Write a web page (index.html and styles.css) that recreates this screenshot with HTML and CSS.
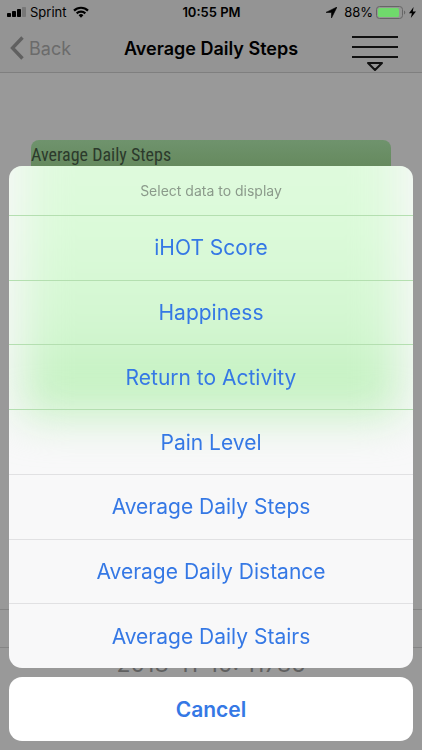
FILE: index.html
```
<!DOCTYPE html>
<html lang="en">
<head>
    <meta charset="UTF-8">
    <meta name="viewport" content="width=device-width, initial-scale=1.0">
    <title>Average Daily Steps</title>
    <link rel="stylesheet" href="styles.css">
</head>
<body>
<header class="top">
    <div class="status">
        <div class="carrier">
            <svg width="19" height="10" viewBox="0 0 19 10">
                <rect x="0" y="6" width="4" height="4" rx="0.8"/>
                <rect x="5" y="4" width="4" height="6" rx="0.8"/>
                <rect x="10" y="2" width="4" height="8" rx="0.8"/>
                <rect x="15" y="0" width="4" height="10" rx="0.8" fill="#777"/>
            </svg>
            <span>Sprint</span>
            <svg class="wifi" width="16" height="12" viewBox="0 0 16 12" fill="none" stroke="#000" stroke-width="2.2">
                <path d="M1 4.6a10 10 0 0 1 14 0"/>
                <path d="M3.7 7.4a6.1 6.1 0 0 1 8.6 0"/>
                <path d="M8 11.800 5.600 9.300a3.400 3.400 0 0 1 4.800 0z" fill="#000" stroke="none"/>
            </svg>
        </div>
        <div class="time">10:55 PM</div>
        <div class="power">
            <svg class="location" width="11" height="11" viewBox="0 0 11 11"><path d="M11 0 0 5.400h5.500V11z" stroke="#000" stroke-width="0.6"/></svg>
            <span>88%</span>
            <svg width="30" height="13" viewBox="0 0 30 13">
                <rect x="0.5" y="0.5" width="26" height="12" rx="3" fill="none" stroke="#666"/>
                <rect x="2" y="2" width="21" height="9" rx="1.5" fill="#70d96c"/>
                <path d="M28 4.5a2.2 2.2 0 0 1 0 4z" fill="#666"/>
            </svg>
            <svg width="7" height="11" viewBox="0 0 7 11"><path d="M4.6 0 0 6.2h2.9L1.8 11 7 4.4H3.8z"/></svg>
        </div>
    </div>
    <nav class="nav">
        <a class="back" href="#">
            <svg width="14" height="24" viewBox="0 0 14 24" fill="none" stroke="#606060" stroke-width="3.4"><path d="M12.5 1.5 2.5 12l10 10.5"/></svg>
            Back
        </a>
        <h1>Average Daily Steps</h1>
        <button class="menu" aria-label="Select data">
            <svg width="46" height="37" viewBox="0 0 46 37" fill="none" stroke="#111" stroke-width="2">
                <path d="M0 2h46M0 12h46M0 22h46"/>
                <path d="M16 28h14L23 35z" stroke-linejoin="round"/>
            </svg>
        </button>
    </nav>
</header>

<main>
    <section class="chart">
        <h2>Average Daily Steps</h2>
    </section>
    <div class="picker">
        <div class="selected"></div>
        <div class="value">2018-11-10: 11786</div>
    </div>
</main>

<div class="sheet">
    <div class="actions">
        <p>Select data to display</p>
        <button>iHOT Score</button>
        <button>Happiness</button>
        <button>Return to Activity</button>
        <button>Pain Level</button>
        <button>Average Daily Steps</button>
        <button>Average Daily Distance</button>
        <button>Average Daily Stairs</button>
    </div>
    <button class="cancel">Cancel</button>
</div>
</body>
</html>
```
FILE: styles.css
```
*{
    box-sizing: border-box;
}
body{
    margin: 0;
    height: 100vh;
    overflow: hidden;
    background: #999;
    color: #000;
    font-family: Inter, "Liberation Sans", sans-serif;
}
h1, h2, p{
    margin: 0;
}
button{
    padding: 0;
    border: 0;
    background: none;
    font-family: inherit;
}
svg{
    display: block;
}

.top{
    background: #949494;
    border-bottom: 1px solid #7f7f7f;
}
.status{
    display: grid;
    grid-template-columns: 1fr auto 1fr;
    align-items: center;
    height: 24px;
    padding: 0 6px 0 7px;
    font-size: 13px;
}
.carrier, .power{
    display: flex;
    align-items: center;
    gap: 4px;
}
.wifi{
    margin-left: 3px;
}
.power{
    justify-content: flex-end;
    gap: 3px;
}
.location{
    margin-right: 4px;
}
.time{
    font-weight: 600;
}
.nav{
    display: grid;
    grid-template-columns: 1fr auto 1fr;
    align-items: center;
    height: 48px;
    padding: 0 10px;
}
.back{
    display: flex;
    align-items: center;
    gap: 5px;
    color: #6b6b6b;
    font-size: 18px;
    text-decoration: none;
}
.nav h1{
    font-size: 18px;
    font-weight: 600;
}
.menu{
    justify-self: end;
    align-self: end;
    margin-right: 14px;
}

.chart{
    height: 270px;
    margin: 67px 31px 0;
    border-radius: 8px;
    background: linear-gradient(#6f936d, #65895d 28px);
}
.chart h2{
    color: #2c3a2c;
    font-family: "Roboto Condensed", "Liberation Sans Narrow", sans-serif;
    font-size: 18px;
    font-weight: normal;
    line-height: 30px;
}
.picker{
    margin-top: 199px;
    text-align: center;
}
.selected{
    height: 39px;
    border: solid #858585;
    border-width: 1px 0;
}
.value{
    color: #606060;
    font-size: 23px;
    line-height: 32px;
}

.sheet{
    position: fixed;
    left: 9px;
    right: 9px;
    bottom: 9px;
    display: flex;
    flex-direction: column;
    gap: 9px;
}
.actions{
    position: relative;
    display: flex;
    flex-direction: column;
    height: 502px;
    border-radius: 13px;
    background: #f8f8f9;
    overflow: hidden;
}
/* the chart showing through the frosted sheet */
.actions::before{
    content: "";
    position: absolute;
    top: -60px;
    left: 14px;
    right: 14px;
    height: 310px;
    background: linear-gradient(#e2fae0, #dbfad9 130px, #d2f6d0 230px, #c4f1c1 280px);
    filter: blur(22px);
}
.actions p{
    position: relative;
    height: 49px;
    color: #8b9a8b;
    font-size: 14px;
    line-height: 50px;
    text-align: center;
}
.actions button{
    position: relative;
    flex: 1;
    border-top: 1px solid #e1e1e3;
    color: #3578e5;
    font-size: 21px;
}
.actions button:nth-of-type(-n+4){
    border-color: #b4dfb0;
}
.cancel{
    height: 64px;
    border-radius: 13px;
    background: #fff;
    color: #3578e5;
    font-size: 21px;
    font-weight: 600;
}
```
